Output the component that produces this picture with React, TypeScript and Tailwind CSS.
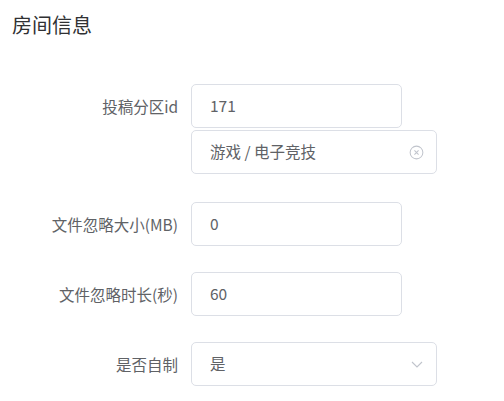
import React from "react";

const font = { fontFamily: '"Noto Sans CJK SC", "Noto Sans", sans-serif' };

function Label({ children }: { children?: React.ReactNode }) {
  return (
    <div className="w-[191px] shrink-0 pr-[13px] text-right text-[15.5px] leading-[44px] text-[#606266]">
      {children}
    </div>
  );
}

function Box({ wide, children }: { wide?: boolean; children?: React.ReactNode }) {
  return (
    <div
      className={`${wide ? "w-[246px]" : "w-[211px]"} h-[44px] rounded-[5px] border border-[#dcdfe6] bg-white flex items-center pl-[18px] pr-[12px] text-[15.5px] text-[#606266]`}
    >
      {children}
    </div>
  );
}

export default function App() {
  return (
    <div className="w-[504px] h-[401px] bg-white overflow-hidden" style={font}>
      <div className="pl-[12px] pt-[12px] text-[20px] leading-[26px] text-[#303133]">房间信息</div>
      <div className="mt-[46px] flex flex-col">
        <div className="flex">
          <Label>投稿分区id</Label>
          <Box>171</Box>
        </div>
        <div className="flex mt-[2px]">
          <Label />
          <Box wide>
            <span className="flex-1">游戏 / 电子竞技</span>
            <svg width="15" height="15" viewBox="0 0 16 16" fill="none" stroke="#c0c4cc" strokeWidth="1.1">
              <circle cx="8" cy="8" r="6.8" />
              <path d="M5.8 5.8 L10.2 10.2 M10.2 5.8 L5.8 10.2" />
            </svg>
          </Box>
        </div>
        <div className="flex mt-[28px]">
          <Label>文件忽略大小(MB)</Label>
          <Box>0</Box>
        </div>
        <div className="flex mt-[26px]">
          <Label>文件忽略时长(秒)</Label>
          <Box>60</Box>
        </div>
        <div className="flex mt-[26px]">
          <Label>是否自制</Label>
          <Box wide>
            <span className="flex-1">是</span>
            <svg width="14" height="14" viewBox="0 0 14 14" fill="none" stroke="#c0c4cc" strokeWidth="1.1">
              <path d="M2 5 L7 10 L12 5" />
            </svg>
          </Box>
        </div>
      </div>
    </div>
  );
}
